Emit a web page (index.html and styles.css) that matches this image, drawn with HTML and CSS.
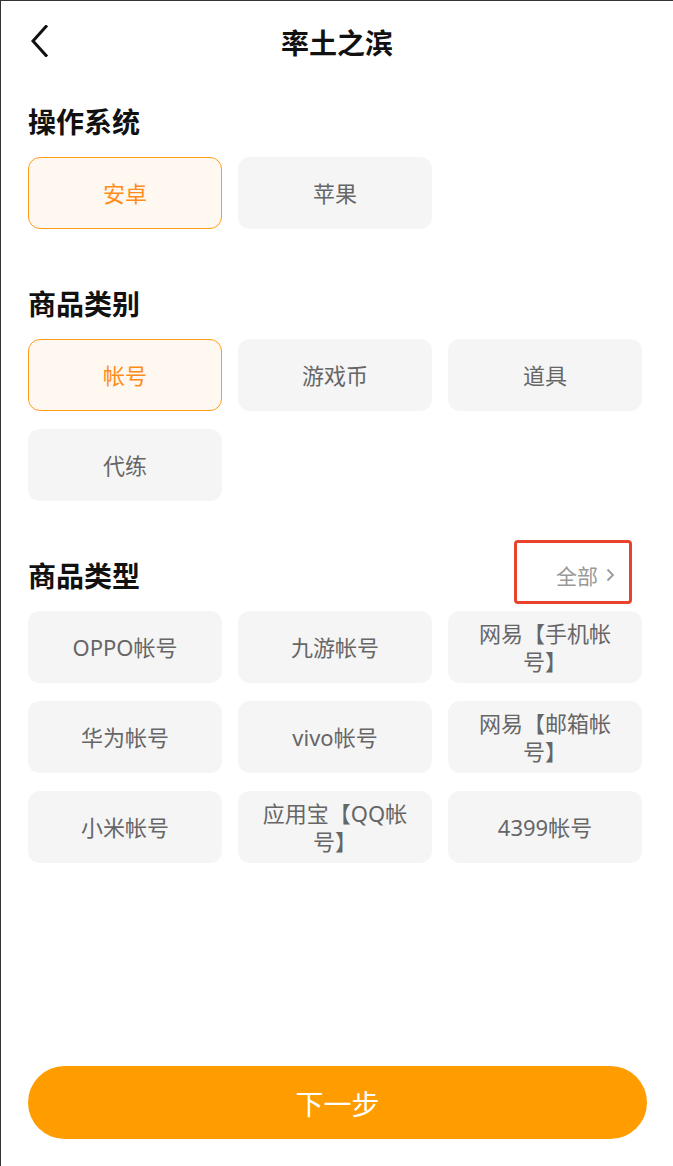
FILE: index.html
```html
<!DOCTYPE html>
<html lang="zh-CN">
<head>
<meta charset="utf-8">
<title>率土之滨</title>
<link rel="stylesheet" href="styles.css">
</head>
<body>
<div class="frame">
  <header class="header">
    <span class="back">
      <svg width="20" height="32" viewBox="0 0 20 32"><path d="M16 1.5 L3 16 L16 30.5" fill="none" stroke="#111" stroke-width="3" stroke-linecap="square"/></svg>
    </span>
    <h1 class="title">率土之滨</h1>
  </header>

  <main class="main">
    <section class="section">
      <div class="section-head"><h2 class="heading">操作系统</h2></div>
      <div class="grid">
        <div class="opt opt-on">安卓</div>
        <div class="opt">苹果</div>
      </div>
    </section>

    <section class="section">
      <div class="section-head"><h2 class="heading">商品类别</h2></div>
      <div class="grid">
        <div class="opt opt-on">帐号</div>
        <div class="opt">游戏币</div>
        <div class="opt">道具</div>
        <div class="opt">代练</div>
      </div>
    </section>

    <section class="section">
      <div class="section-head">
        <h2 class="heading">商品类型</h2>
        <span class="all">全部<svg class="all-chev" width="12" height="16" viewBox="0 0 12 16"><path d="M3.5 2.5 L9 8 L3.5 13.5" fill="none" stroke="#999" stroke-width="1.8"/></svg><span class="mark"></span></span>
      </div>
      <div class="grid">
        <div class="opt">OPPO帐号</div>
        <div class="opt">九游帐号</div>
        <div class="opt">网易【手机帐号】</div>
        <div class="opt">华为帐号</div>
        <div class="opt">vivo帐号</div>
        <div class="opt">网易【邮箱帐号】</div>
        <div class="opt">小米帐号</div>
        <div class="opt">应用宝【QQ帐号】</div>
        <div class="opt">4399帐号</div>
      </div>
    </section>
  </main>

  <footer class="footer">
    <button class="next">下一步</button>
  </footer>
</div>
</body>
</html>
```
FILE: styles.css
```css
* { box-sizing: border-box; }
html, body { margin: 0; padding: 0; background: #fff; }
body {
  font-family: "Noto Sans", "Noto Sans CJK SC", sans-serif;
  color: #111;
}
.frame {
  width: 673px;
  height: 1166px;
  border-top: 1px solid #333;
  border-left: 1px solid #333;
  display: flex;
  flex-direction: column;
}
.header {
  height: 82px;
  display: flex;
  align-items: center;
  justify-content: center;
  position: relative;
}
.back {
  position: absolute;
  left: 29px;
  top: 24px;
  width: 20px;
  height: 32px;
  display: block;
}
.back svg { display: block; }
.title {
  margin: 0;
  font-size: 28px;
  font-weight: 700;
  line-height: 40px;
  font-family: "Noto Sans CJK SC", sans-serif;
}
.main {
  padding: 18px 0 0 27px;
  flex: 1;
}
.section { margin-bottom: 54px; }
.section-head {
  display: flex;
  align-items: center;
  justify-content: space-between;
  width: 614px;
  height: 40px;
  margin-bottom: 16px;
  position: relative;
}
.heading {
  margin: 0;
  font-size: 28px;
  font-weight: 700;
  line-height: 40px;
  color: #111;
  font-family: "Noto Sans CJK SC", sans-serif;
}
.all {
  position: relative;
  display: flex;
  align-items: center;
  gap: 6px;
  margin-right: 26px;
  height: 28px;
  font-size: 21px;
  line-height: 28px;
  color: #999;
  font-family: "Noto Sans CJK SC", sans-serif;
}
.all-chev { display: block; }
.mark {
  position: absolute;
  left: -42px;
  right: -16px;
  top: -21px;
  bottom: -15px;
  border: 3px solid #e8432c;
  border-radius: 4px;
}
.grid {
  display: grid;
  grid-template-columns: repeat(3, 194px);
  column-gap: 16px;
  row-gap: 18px;
}
.opt {
  height: 72px;
  border-radius: 12px;
  background: #f5f5f5;
  color: #666;
  font-size: 22px;
  line-height: 28px;
  display: flex;
  align-items: center;
  justify-content: center;
  text-align: center;
  padding: 0 22px;
}
.opt-on {
  background: #fff8f0;
  border: 1px solid #ff9c1a;
  color: #ff8c1a;
}
.footer {
  padding: 0 0 27px 27px;
}
.next {
  width: 619px;
  height: 73px;
  border: none;
  border-radius: 37px;
  background: #ff9c00;
  color: #fff;
  font-size: 28px;
  font-family: "Noto Sans CJK SC", sans-serif;
  display: block;
  padding: 0;
}
```
